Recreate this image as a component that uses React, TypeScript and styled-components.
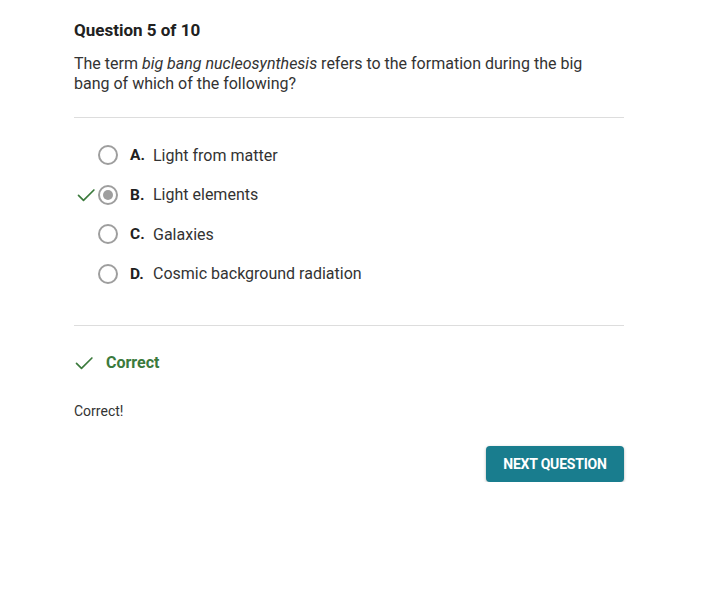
import React, { FC } from 'react';
import styled, { createGlobalStyle } from 'styled-components';

const GlobalStyle = createGlobalStyle`
  html, body {
    margin: 0;
    padding: 0;
    background: #ffffff;
  }

  body {
    font-family: Roboto, "Liberation Sans", Arial, sans-serif;
    color: #212121;
  }
`;

const Page = styled.div`
  width: 550px;
  padding: 19px 0 0 74px;
`;

const Heading = styled.h2`
  margin: 0;

  font-size: 17px;
  font-weight: 700;
  line-height: 22px;
  color: #212121;
`;

const Prompt = styled.p`
  margin: 13px 0 0;
  max-width: 525px;

  font-size: 16px;
  line-height: 20px;
  color: #333333;
`;

const Divider = styled.hr`
  margin: 0;

  height: 1px;
  border: 0;
  background: #dddddd;
`;

const TopDivider = styled(Divider)`
  margin-top: 23px;
`;

const Options = styled.ul`
  margin: 0;
  padding: 27px 0 41px;

  list-style: none;

  display: flex;
  flex-direction: column;
  gap: 19.5px;
`;

const Option = styled.li`
  display: flex;
  align-items: center;
  height: 20px;
`;

const MarkSlot = styled.span`
  width: 24px;

  display: flex;
  align-items: center;
  justify-content: center;
`;

const Radio = styled.span<{ $checked: boolean }>`
  position: relative;

  width: 20px;
  height: 20px;
  box-sizing: border-box;

  border: 2px solid #9e9e9e;
  border-radius: 50%;

  &::after {
    content: '';
    display: ${ p => p.$checked ? 'block' : 'none' };
    position: absolute;
    top: 3px;
    left: 3px;
    width: 10px;
    height: 10px;
    border-radius: 50%;
    background: #9e9e9e;
  }
`;

const Letter = styled.span`
  margin-left: 12px;
  width: 23px;

  font-size: 15.5px;
  font-weight: 700;
  color: #212121;
`;

const Label = styled.span`
  font-size: 16px;
  color: #333333;
`;

const Feedback = styled.div`
  padding-top: 27px;

  display: flex;
  align-items: center;
  gap: 12px;
  height: 20px;
`;

const FeedbackTitle = styled.span`
  font-size: 16px;
  font-weight: 700;
  color: #3b7a3c;
`;

const FeedbackText = styled.p`
  margin: 30px 0 0;

  font-size: 14px;
  line-height: 16px;
  color: #333333;
`;

const Actions = styled.div`
  margin-top: 27px;

  display: flex;
  justify-content: flex-end;
`;

const NextButton = styled.button`
  width: 138px;
  height: 36px;

  border: 0;
  border-radius: 4px;
  background: #197d8e;
  box-shadow: 0 1px 3px rgb(0 0 0 / 30%);

  font-family: Roboto, "Liberation Sans", Arial, sans-serif;
  font-size: 14px;
  font-weight: 700;
  letter-spacing: -0.2px;
  color: #ffffff;
  text-transform: uppercase;

  cursor: pointer;
`;

const Check: FC<{ size?: number }> = ({ size = 18 }) => (
	<svg width={ size } height={ size } viewBox="0 0 24 24" fill="none">
		<path d="M3 12.5l6 6L21.5 6" stroke="#3b7a3c" strokeWidth="2" strokeLinecap="round" strokeLinejoin="round" />
	</svg>
);

type answerType = {
	letter: string,
	text: string,
	selected: boolean,
};

const answers: answerType[] = [
	{ letter: 'A.', text: 'Light from matter', selected: false },
	{ letter: 'B.', text: 'Light elements', selected: true },
	{ letter: 'C.', text: 'Galaxies', selected: false },
	{ letter: 'D.', text: 'Cosmic background radiation', selected: false },
];

const App: FC = () => (
	<>
		<GlobalStyle />
		<Page>
			<Heading>Question 5 of 10</Heading>
			<Prompt>
				The term <em>big bang nucleosynthesis</em> refers to the formation during the big bang of which of the following?
			</Prompt>
			<TopDivider />
			<Options>
				{ answers.map(a => (
					<Option key={ a.letter }>
						<MarkSlot>{ a.selected && <Check size={ 20 } /> }</MarkSlot>
						<Radio $checked={ a.selected } />
						<Letter>{ a.letter }</Letter>
						<Label>{ a.text }</Label>
					</Option>
				)) }
			</Options>
			<Divider />
			<Feedback>
				<Check size={ 20 } />
				<FeedbackTitle>Correct</FeedbackTitle>
			</Feedback>
			<FeedbackText>Correct!</FeedbackText>
			<Actions>
				<NextButton>Next Question</NextButton>
			</Actions>
		</Page>
	</>
);

export default App;
